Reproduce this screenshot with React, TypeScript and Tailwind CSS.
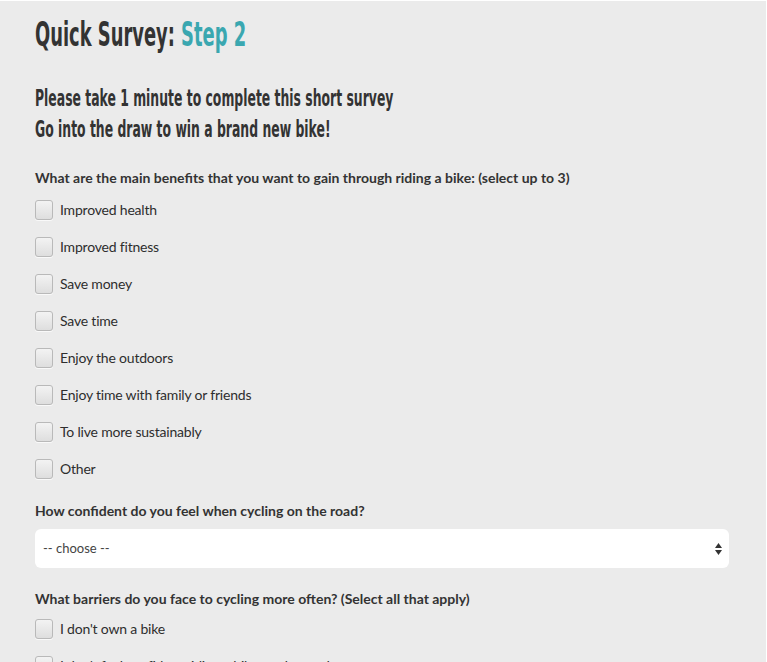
import { useState } from 'react';

const benefits = [
  'Improved health',
  'Improved fitness',
  'Save money',
  'Save time',
  'Enjoy the outdoors',
  'Enjoy time with family or friends',
  'To live more sustainably',
  'Other',
];

const barriers = ["I don't own a bike", "I don't feel confident riding a bike on the road"];

function Check({ label }: { label: string }) {
  const [on, setOn] = useState(false);
  return (
    <label className="flex items-center gap-[7px] h-[37px] cursor-pointer">
      <span
        onClick={() => setOn(!on)}
        className="w-[18px] h-[20px] rounded-[3px] border border-[#b9b9b9] bg-gradient-to-b from-[#f3f3f3] to-[#dedede] shadow-[0_1px_0_rgba(255,255,255,0.7)] flex items-center justify-center text-[12px] text-[#333]"
      >
        {on ? '✓' : ''}
      </span>
      <span className="text-[14px] text-[#2e2e2e] font-['Lato',sans-serif] tracking-[-0.2px]">{label}</span>
    </label>
  );
}

export default function App() {
  return (
    <div className="min-h-[662px] bg-[#ebebeb] border-t border-r border-white pl-[35px] pr-[37px] pt-[10px] font-['Lato',sans-serif]">
      <h1 className="origin-left scale-x-[0.585] whitespace-nowrap font-['DejaVu_Sans_Condensed','DejaVu_Sans',sans-serif] font-bold text-[34px] leading-[46px] text-[#333]">
        Quick Survey: <span className="text-[#3aa7b0]">Step 2</span>
      </h1>

      <div className="mt-[26px] origin-left scale-x-[0.6] whitespace-nowrap font-['DejaVu_Sans_Condensed','DejaVu_Sans',sans-serif] font-bold text-[23px] leading-[31px] text-[#333]">
        <p>Please take 1 minute to complete this short survey</p>
        <p>Go into the draw to win a brand new bike!</p>
      </div>

      <p className="mt-[23px] text-[14px] font-bold text-[#333] leading-[20px]">
        What are the main benefits that you want to gain through riding a bike: (select up to 3)
      </p>
      <div className="mt-[3px]">
        {benefits.map((b) => (
          <Check key={b} label={b} />
        ))}
      </div>

      <p className="mt-[14px] text-[14px] font-bold text-[#333] leading-[20px]">
        How confident do you feel when cycling on the road?
      </p>
      <div className="mt-[8px] h-[39px] bg-white rounded-[6px] flex items-center justify-between pl-[8px] pr-[6px]">
        <span className="text-[13px] text-[#444]">-- choose --</span>
        <svg width="9" height="14" viewBox="0 0 9 14">
          <path d="M4.5 1 L8 6 L1 6 Z" fill="#333" />
          <path d="M4.5 13 L8 8 L1 8 Z" fill="#333" />
        </svg>
      </div>

      <p className="mt-[21px] text-[14px] font-bold text-[#333] leading-[20px]">
        What barriers do you face to cycling more often? (Select all that apply)
      </p>
      <div className="mt-[1px]">
        {barriers.map((b) => (
          <Check key={b} label={b} />
        ))}
      </div>
    </div>
  );
}
